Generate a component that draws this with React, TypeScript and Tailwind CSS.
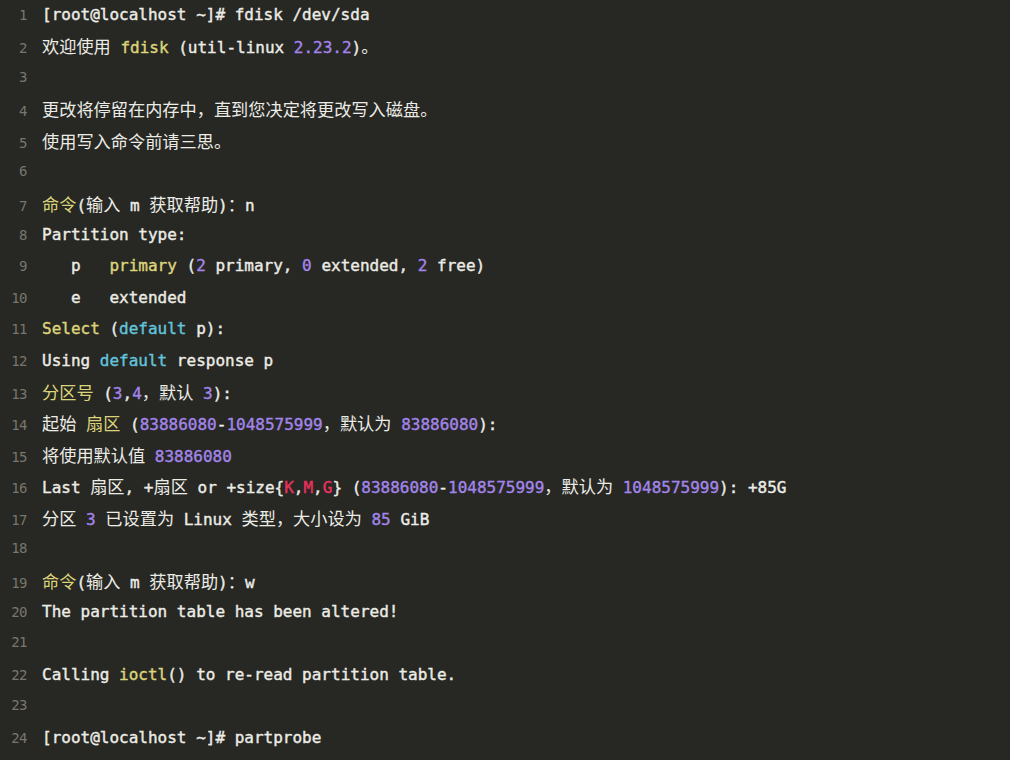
import React from "react";

type Seg = [string, string?];

const W = "text-[#ecece6]";
const Y = "text-[#dcd47a]";
const P = "text-[#a285e8]";
const C = "text-[#62c4dc]";
const R = "text-[#e8325f]";

const lines: Seg[][] = [
  [["[root@localhost ~]# fdisk /dev/sda"]],
  [["欢迎使用 "], ["fdisk", Y], [" (util-linux "], ["2.23.2", P], [")。"]],
  [],
  [["更改将停留在内存中，直到您决定将更改写入磁盘。"]],
  [["使用写入命令前请三思。"]],
  [],
  [["命令", Y], ["(输入 m 获取帮助)：n"]],
  [["Partition type:"]],
  [["   p   "], ["primary", Y], [" ("], ["2", P], [" primary, "], ["0", P], [" extended, "], ["2", P], [" free)"]],
  [["   e   extended"]],
  [["Select", Y], [" ("], ["default", C], [" p):"]],
  [["Using "], ["default", C], [" response p"]],
  [["分区号", Y], [" ("], ["3", P], [","], ["4", P], ["，默认 "], ["3", P], ["):"]],
  [["起始 "], ["扇区", Y], [" ("], ["83886080", P], ["-"], ["1048575999", P], ["，默认为 "], ["83886080", P], ["):"]],
  [["将使用默认值 "], ["83886080", P]],
  [
    ["Last 扇区, +扇区 or +size{"],
    ["K", R],
    [","],
    ["M", R],
    [","],
    ["G", R],
    ["} ("],
    ["83886080", P],
    ["-"],
    ["1048575999", P],
    ["，默认为 "],
    ["1048575999", P],
    ["): +85G"],
  ],
  [["分区 "], ["3", P], [" 已设置为 Linux 类型，大小设为 "], ["85", P], [" GiB"]],
  [],
  [["命令", Y], ["(输入 m 获取帮助)：w"]],
  [["The partition table has been altered!"]],
  [],
  [["Calling "], ["ioctl", Y], ["() to re-read partition table."]],
  [],
  [["[root@localhost ~]# partprobe"]],
];

// split a run into CJK / non-CJK pieces so the wide glyphs get their own size
const pieces = (s: string) => s.match(/[\u3000-\u303f\u4e00-\u9fff\uff00-\uffef]+|[^\u3000-\u303f\u4e00-\u9fff\uff00-\uffef]+/g) || [];
const isCjk = (s: string) => /[\u3000-\u303f\u4e00-\u9fff\uff00-\uffef]/.test(s);

const Code = ({ segs }: { segs: Seg[] }) => (
  <>
    {segs.map(([text, color], i) => (
      <span key={i} className={color || W}>
        {pieces(text).map((p, j) =>
          isCjk(p) ? (
            <span
              key={j}
              className="text-[17.2px] [-webkit-text-stroke:0px] [font-family:'Noto_Sans_CJK_SC',sans-serif]"
            >
              {p}
            </span>
          ) : (
            <span key={j}>{p}</span>
          )
        )}
      </span>
    ))}
  </>
);

export default function App() {
  return (
    <div className="w-[1010px] h-[760px] overflow-hidden bg-[#272723]">
      <div className="flex flex-col -mt-px">
        {lines.map((segs, i) => (
          <div key={i} className="flex h-[31.43px] items-baseline leading-[31.43px]">
            <div className="w-[27px] shrink-0 text-right text-[14px] text-[#77776f] [font-family:'DejaVu_Sans_Mono',monospace] tracking-[-0.5px]">
              {i + 1}
            </div>
            <div className="ml-[15px] whitespace-pre text-[16px] [-webkit-text-stroke:0.4px] [font-family:'DejaVu_Sans_Mono',monospace]">
              <Code segs={segs} />
            </div>
          </div>
        ))}
      </div>
    </div>
  );
}
